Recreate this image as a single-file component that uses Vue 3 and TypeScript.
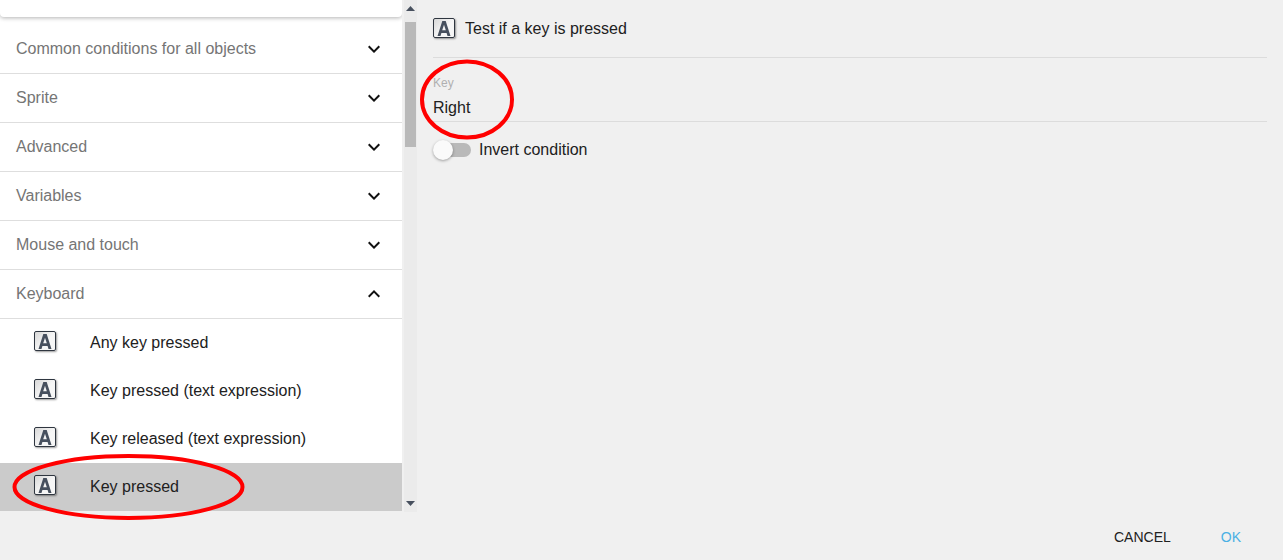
<script setup lang="ts">
const groups = ['Common conditions for all objects', 'Sprite', 'Advanced', 'Variables', 'Mouse and touch'];
const items = [
  { label: 'Any key pressed', selected: false },
  { label: 'Key pressed (text expression)', selected: false },
  { label: 'Key released (text expression)', selected: false },
  { label: 'Key pressed', selected: true },
];
</script>

<template>
  <div class="dialog">
    <div class="body">
      <div class="left">
        <div class="list">
          <div class="search"></div>
          <div class="groups">
            <div v-for="g in groups" :key="g" class="group">
              <span>{{ g }}</span>
              <svg class="chevron" width="24" height="24" viewBox="0 0 24 24"><path d="M7.41 8.59 12 13.17l4.59-4.58L18 10l-6 6-6-6z" /></svg>
            </div>
            <div class="group">
              <span>Keyboard</span>
              <svg class="chevron" width="24" height="24" viewBox="0 0 24 24"><path d="M7.41 15.41 12 10.83l4.59 4.58L18 14l-6-6-6 6z" /></svg>
            </div>
            <div v-for="item in items" :key="item.label" class="item" :class="{ selected: item.selected }">
              <span class="key-icon"><svg width="14" height="16" viewBox="0 0 14 16"><path d="M5.3 1h3.4L13.5 16h-3l-.9-3H4.4l-.9 3h-3zM5.2 10.2h3.6L7 4.8z" /></svg></span>
              <span>{{ item.label }}</span>
            </div>
          </div>
        </div>
        <div class="scrollbar">
          <svg class="arrow" width="9" height="5" viewBox="0 0 9 5"><path d="M4.5 0 9 5H0z" /></svg>
          <div class="thumb"></div>
          <svg class="arrow down" width="9" height="5" viewBox="0 0 9 5"><path d="M0 0h9L4.5 5z" /></svg>
        </div>
      </div>
      <div class="right">
        <div class="title">
          <span class="key-icon"><svg width="14" height="16" viewBox="0 0 14 16"><path d="M5.3 1h3.4L13.5 16h-3l-.9-3H4.4l-.9 3h-3zM5.2 10.2h3.6L7 4.8z" /></svg></span>
          <span>Test if a key is pressed</span>
        </div>
        <div class="field">
          <label>Key</label>
          <div class="value">Right</div>
        </div>
        <div class="toggle-row">
          <span class="toggle"><span class="knob"></span></span>
          <span>Invert condition</span>
        </div>
      </div>
    </div>
    <div class="actions">
      <button class="btn">CANCEL</button>
      <button class="btn primary">OK</button>
    </div>
    <svg class="marks" width="1283" height="560" viewBox="0 0 1283 560">
      <defs>
        <filter id="soft" x="-10%" y="-10%" width="120%" height="120%"><feGaussianBlur stdDeviation="0.6" /></filter>
      </defs>
      <ellipse cx="467" cy="99.5" rx="45" ry="38" />
      <ellipse cx="128.5" cy="487" rx="114" ry="31" />
    </svg>
  </div>
</template>

<style>
html, body { margin: 0; background: #f0f0f0; overflow: hidden; }
</style>

<style scoped>
.dialog {
  position: relative;
  width: 1283px;
  height: 560px;
  display: flex;
  flex-direction: column;
  background: #f0f0f0;
  color: #212121;
  font-family: "Liberation Sans", Arial, sans-serif;
  font-size: 16px;
  overflow: hidden;
}
.body { display: flex; height: 512px; }
.left { display: flex; width: 417px; flex: none; border-right: 2px solid #dcdcdc; box-sizing: border-box; }
.list { width: 402px; flex: none; background: #fff; height: 511px; overflow: hidden; }
.search { height: 17px; background: #fff; border-radius: 0 0 4px 4px; box-shadow: 0 1px 4px rgba(0, 0, 0, 0.3); }
.groups { padding-top: 8px; }
.group {
  display: flex;
  align-items: center;
  justify-content: space-between;
  height: 48px;
  padding: 0 16px;
  border-bottom: 1px solid #dedede;
  color: #757575;
  font-size: 16px;
}
.chevron { fill: #111; }
.item { display: flex; align-items: center; height: 48px; padding-left: 34px; font-size: 16px; color: #212121; }
.item.selected { background: #cbcbcb; }
.item .key-icon { margin-right: 34px; }
.key-icon {
  display: flex;
  align-items: center;
  justify-content: center;
  width: 22px;
  height: 20px;
  box-sizing: border-box;
  flex: none;
  margin-top: -4px;
  border: 1px solid #2f3640;
  border-radius: 2px;
  background: linear-gradient(135deg, #d8d8d8, #f6f6f6 55%);
  box-shadow: 1px 1px 2px rgba(0, 0, 0, 0.4);
}
.key-icon svg { fill: #47505e; }
.scrollbar {
  width: 13px;
  flex: none;
  display: flex;
  flex-direction: column;
  align-items: center;
  margin-left: 2px;
  background: #ebebeb;
}
.arrow { fill: #47505e; margin-top: 6px; }
.arrow.down { margin-top: auto; margin-bottom: 6px; }
.thumb { width: 11px; height: 125px; margin-top: 11px; background: #b9b9b9; }
.right { flex: 1; padding: 0 16px; }
.title {
  display: flex;
  align-items: center;
  gap: 10px;
  height: 57px;
  border-bottom: 1px solid #dcdcdc;
}
.title .key-icon { margin-top: -2px; }
.field { height: 64px; border-bottom: 1px solid #dcdcdc; box-sizing: border-box; padding-top: 18px; }
.field label { display: block; font-size: 12px; line-height: 14px; color: #b0b0b0; }
.value { font-size: 16px; line-height: 20px; margin-top: 8px; }
.toggle-row { display: flex; align-items: center; gap: 8px; height: 55px; }
.toggle { display: block; position: relative; width: 38px; height: 14px; }
.toggle::before {
  content: "";
  position: absolute;
  inset: 0 0 0 2px;
  border-radius: 7px;
  background: #b9b9b9;
}
.knob {
  position: absolute;
  left: 0;
  top: -3px;
  width: 20px;
  height: 20px;
  border-radius: 50%;
  background: #fafafa;
  box-shadow: 0 1px 3px rgba(0, 0, 0, 0.35);
}
.actions { display: flex; justify-content: flex-end; align-items: center; flex: 1; padding-right: 16px; gap: 8px; padding-top: 2px; }
.btn {
  border: 0;
  background: none;
  font-family: inherit;
  font-size: 14px;
  color: #212121;
  padding: 0 16px;
  height: 36px;
}
.btn.primary { color: #4ab0e4; padding: 0 26px; }
.marks { position: absolute; inset: 0; pointer-events: none; }
.marks ellipse { fill: none; stroke: #f00; stroke-width: 4; filter: url(#soft); }
</style>
